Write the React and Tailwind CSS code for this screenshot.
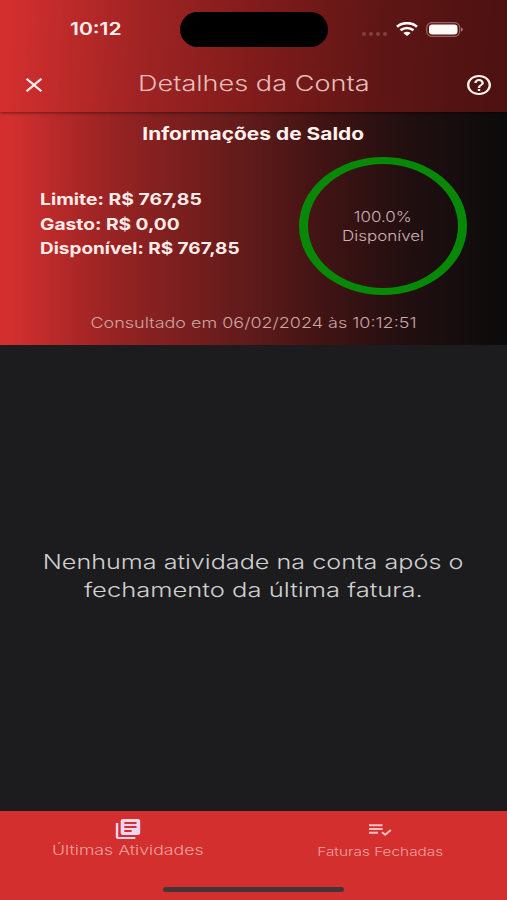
import React from 'react';
import { MdClose, MdHelpOutline, MdLibraryBooks } from 'react-icons/md';

const Label = ({ className = '', children }) => (
  <span className={`block whitespace-nowrap ${className}`}>{children}</span>
);

const StatusBar = () => (
  <div className="flex h-[59px] items-center pl-[70px] pr-[44px]">
    <Label className="mt-px w-[110px] origin-left scale-x-[1.24] text-[17px] font-semibold text-[#fff1ee]">10:12</Label>
    <div className="h-[35px] w-[148px] shrink-0 rounded-full bg-black" />
    <div className="ml-auto flex items-center">
      <div className="mr-[9px] mt-[8px] flex gap-[3px]">
        {[0, 1, 2, 3].map((dot) => (
          <span key={dot} className="h-[4px] w-[4px] rounded-full bg-[#843f40]" />
        ))}
      </div>
      <svg className="mb-px mr-[8px] h-[14px] w-[22px]" viewBox="0 0 22 14" fill="none" stroke="#fffaf5">
        <path d="M1 4.7C6.6 0 15.4 0 21 4.7" strokeWidth="2.8" />
        <path d="M4.5 8.3c3.8-3.1 9.2-3.1 13 0" strokeWidth="2.7" />
        <path d="M7.3 11c2.2-1.7 5.2-1.7 7.4 0L11 14z" fill="#fffaf5" stroke="none" />
      </svg>
      <svg className="mb-px h-[15px] w-[37px]" viewBox="0 0 37 15">
        <rect x=".7" y=".7" width="33" height="13.6" rx="5" fill="none" stroke="#9a6464" strokeWidth="1.2" />
        <rect x="3" y="2.5" width="28.5" height="10" rx="3.2" fill="#fffaf5" />
        <path d="M35 5.5c2.4.6 2.4 3.4 0 4z" fill="#a57575" />
      </svg>
    </div>
  </div>
);

const Header = () => (
  <header className="relative h-[112px] bg-linear-[93deg,#d32f2f_2%,#9e2323_29%,#801c1b_50%,#5e1615_75%,#4c1111] shadow-[0_1px_3px_rgba(0,0,0,0.45)]">
    <StatusBar />
    <div className="flex h-[51px] items-center justify-between pl-[22px] pr-[16px]">
      <MdClose className="h-[24px] w-[24px] scale-x-[1.18] text-[#ffece8]" />
      <Label className="mr-[6px] mb-[2px] scale-x-[1.29] text-[21px] font-[350] text-[#e6bfbc]">
        Detalhes da Conta
      </Label>
      <MdHelpOutline className="h-[24px] w-[24px] scale-x-[1.2] text-[#fff6f2]" />
    </div>
  </header>
);

const BalanceCard = ({ limit, spent, available, percent }) => (
  <section className="flex h-[233px] flex-col bg-linear-[90deg,#d32f2f_2%,#9e2424_20%,#842020_31%,#5e1a1a_50%,#401313_64%,#220f10_80%,#0b0b0b]">
    <Label className="mx-auto mt-[9px] scale-x-[1.23] text-[17px] leading-[26px] font-bold text-[#fff1ee]">
      Informações de Saldo
    </Label>
    <div className="mt-[10px] flex h-[138px] items-center pl-[40px] pr-[40px]">
      <div className="mb-[4px] flex-1 text-[16px] leading-[24.5px] font-bold text-[#ffebe8]">
        <Label className="origin-left scale-x-[1.21]">Limite: {limit}</Label>
        <Label className="origin-left scale-x-[1.2]">Gasto: {spent}</Label>
        <Label className="origin-left scale-x-[1.185]">Disponível: {available}</Label>
      </div>
      <div className="flex h-[138px] w-[168px] flex-col items-center justify-center rounded-[50%] border-x-[9px] border-y-[7px] border-[#078807] pb-px text-[14.5px] leading-[19px] font-[350] text-[#cdb2b2]">
        <Label className="scale-x-[1.17]">{percent}</Label>
        <Label className="scale-x-[1.17]">Disponível</Label>
      </div>
    </div>
    <Label className="mx-auto mt-[18px] scale-x-[1.24] text-[14.5px] leading-[20px] font-[350] text-[#cda5a3]">
      Consultado em 06/02/2024 às 10:12:51
    </Label>
  </section>
);

const BottomNav = () => (
  <nav className="flex h-[89px] flex-col bg-[#d32f2f]">
    <div className="flex h-[76px]">
      <div className="flex w-[255px] flex-col items-center pt-[6px]">
        <MdLibraryBooks className="h-[24px] w-[24px] scale-x-[1.22] text-[#ecd5ee]" />
        <Label className="scale-x-[1.31] text-[13.5px] leading-[18px] font-[350] text-[#f0a09e]">
          Últimas Atividades
        </Label>
      </div>
      <div className="flex flex-1 flex-col items-center pt-[12px] pr-[2px]">
        <svg className="h-[14px] w-[24px]" viewBox="0 0 24 14" fill="none" stroke="#f8c3bf" strokeWidth="2">
          <path d="M1 2.2h13.5M1 6h13.5M1 9.8h9" />
          <path d="M14 9.2l3.2 2.6L22.8 7" />
        </svg>
        <Label className="mt-[6px] scale-x-[1.28] text-[12px] leading-[18px] font-[350] text-[#f0a09e]">
          Faturas Fechadas
        </Label>
      </div>
    </div>
    <div className="mx-auto h-[5px] w-[181px] rounded-full bg-[#443636]" />
  </nav>
);

const App = () => (
  <div className="flex h-[900px] w-[507px] flex-col overflow-hidden bg-[#1c1c1e] font-['Inter','Liberation_Sans',sans-serif]">
    <Header />
    <BalanceCard limit="R$ 767,85" spent="R$ 0,00" available="R$ 767,85" percent="100.0%" />
    <main className="flex flex-1 flex-col items-center justify-center pb-[4px] text-[19.5px] leading-[28px] font-[350] text-[#d0d0d0]">
      <Label className="scale-x-[1.29]">Nenhuma atividade na conta após o</Label>
      <Label className="scale-x-[1.31]">fechamento da última fatura.</Label>
    </main>
    <BottomNav />
  </div>
);

export default App;
